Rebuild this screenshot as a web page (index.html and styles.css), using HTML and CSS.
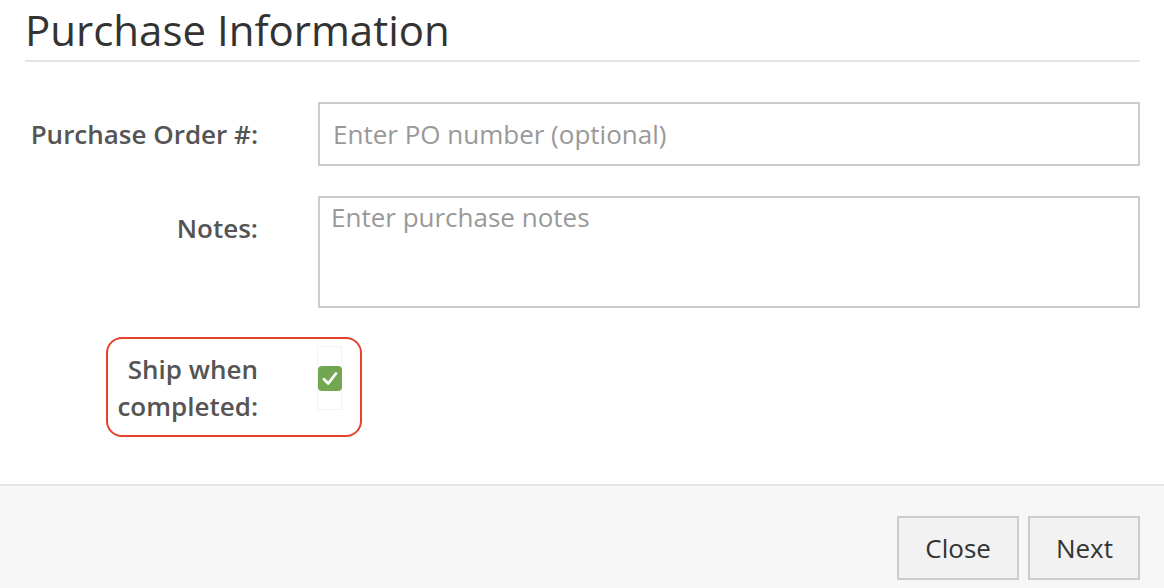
FILE: index.html
```html
<!DOCTYPE html>
<html>
<head>
<meta charset="utf-8">
<link rel="stylesheet" href="styles.css">
</head>
<body>
<div class="modal">
  <div class="content">
    <h1 class="title">Purchase Information</h1>
    <form class="form">
      <div class="row">
        <label class="label">Purchase Order #:</label>
        <div class="field"><input class="input" type="text" placeholder="Enter PO number (optional)"></div>
      </div>
      <div class="row">
        <label class="label">Notes:</label>
        <div class="field"><textarea class="textarea" placeholder="Enter purchase notes"></textarea></div>
      </div>
      <div class="row ship">
        <label class="label">Ship when completed:</label>
        <div class="field">
          <span class="cbwrap">
            <span class="checkbox">
              <svg viewBox="0 0 24 24" width="24" height="25"><path d="M6 12.8 L10.2 17 L18 7" fill="none" stroke="#fff" stroke-width="2.8" stroke-linecap="round" stroke-linejoin="round"/></svg>
            </span>
          </span>
        </div>
      </div>
    </form>
  </div>
  <div class="footer">
    <button class="btn btn-close" type="button">Close</button>
    <button class="btn btn-next" type="button">Next</button>
  </div>
</div>
</body>
</html>
```

FILE: styles.css
```css
html, body {
  margin: 0;
  padding: 0;
  background: #fff;
}
body {
  font-family: "Open Sans", "Liberation Sans", sans-serif;
  color: #333;
  width: 1164px;
  height: 588px;
  overflow: hidden;
}
.modal {
  display: flex;
  flex-direction: column;
  height: 588px;
}
.content {
  padding: 0 24px 0 25px;
  flex: 0 0 484px;
  box-sizing: border-box;
}
.title {
  margin: 0;
  font-weight: 400;
  font-size: 42px;
  line-height: 60px;
  height: 60px;
  color: #333;
  border-bottom: 2px solid #e5e5e5;
  box-sizing: content-box;
}
.form {
  margin-top: 40px;
  display: flex;
  flex-direction: column;
  gap: 31px;
}
.row {
  display: grid;
  grid-template-columns: 233px 1fr;
  column-gap: 60px;
  align-items: center;
}
.label {
  text-align: right;
  font-weight: 600;
  font-size: 26px;
  color: #555;
  line-height: 37px;
}
.input, .textarea {
  display: block;
  width: 100%;
  box-sizing: border-box;
  border: 2px solid #ccc;
  border-radius: 0;
  background: #fff;
  font-family: "Open Sans", "Liberation Sans", sans-serif;
  font-size: 26px;
  color: #333;
  padding: 0 13px;
  outline: none;
}
.input {
  height: 64px;
}
.textarea {
  height: 112px;
  resize: none;
  padding: 1px 11px 0;
  line-height: 36px;
  margin-top: -1px;
}
.input::placeholder, .textarea::placeholder {
  color: #999;
}
.row:nth-child(2) {
  align-items: start;
}
.row:nth-child(2) .label {
  padding-top: 13px;
}
.ship {
  position: relative;
  margin-top: -2px;
  height: 100px;
}
.ship .label {
  width: 150px;
  justify-self: end;
  margin-top: 2px;
}
.ship::before {
  content: "";
  position: absolute;
  left: 81px;
  top: 0;
  width: 256px;
  height: 100px;
  box-sizing: border-box;
  border: 2px solid #e5432e;
  border-radius: 16px;
  pointer-events: none;
}
.field {
  min-width: 0;
}
.cbwrap {
  display: flex;
  align-items: center;
  width: 25px;
  height: 64px;
  box-sizing: border-box;
  border: 1px solid #f3f3f3;
  margin-top: -18px;
  margin-left: -1px;
}
.checkbox {
  display: block;
  width: 24px;
  height: 25px;
  background: #72a650;
  border-radius: 4px;
}
.checkbox svg {
  display: block;
}
.footer {
  flex: 1;
  border-top: 2px solid #e5e5e5;
  background: #f7f7f7;
  display: flex;
  justify-content: flex-end;
  align-items: flex-start;
  gap: 9px;
  padding: 30px 24px 0 0;
}
.btn {
  height: 64px;
  box-sizing: border-box;
  border: 2px solid #ccc;
  background: #f2f2f2;
  font-family: "Open Sans", "Liberation Sans", sans-serif;
  font-size: 26px;
  color: #333;
  padding: 0 26px;
  border-radius: 0;
}
.btn-next {
  padding: 0 25px 0 26px;
}
```
